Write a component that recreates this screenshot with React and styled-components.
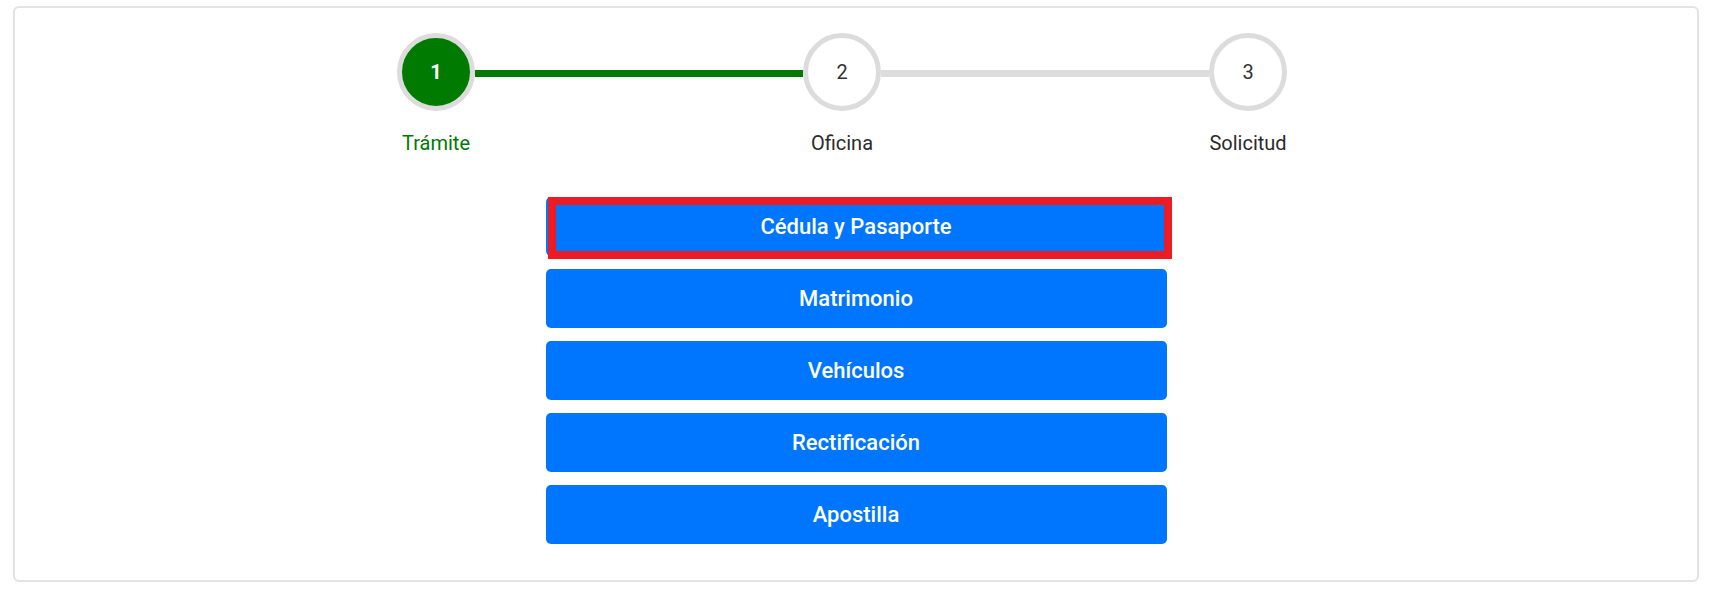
import { Fragment } from 'react';
import styled, { createGlobalStyle } from 'styled-components';

const GlobalStyle = createGlobalStyle`
  html, body {
    margin: 0;
    padding: 0;
    background: #ffffff;
    font-family: Roboto, 'Liberation Sans', sans-serif;
  }
`;

const Page = styled.div`
  padding: 6px 16px 12px 13px;
`;

const Card = styled.div`
  display: flex;
  flex-direction: column;
  align-items: center;
  padding: 25px 0 36px;
  background: #ffffff;
  border: 2px solid #e3e3e3;
  border-radius: 6px;
`;

const Stepper = styled.div`
  display: flex;
  align-items: flex-start;
  margin-right: 28px;
`;

const Step = styled.div`
  display: flex;
  flex-direction: column;
  align-items: center;
  width: 78px;
`;

const Circle = styled.div`
  box-sizing: border-box;
  width: 78px;
  height: 78px;
  border: 5px solid #dcdcdc;
  border-radius: 50%;
  display: flex;
  align-items: center;
  justify-content: center;
  background: ${p => (p.$active ? '#007a00' : '#ffffff')};
  color: ${p => (p.$active ? '#ffffff' : '#333333')};
  font-size: 20px;
  font-weight: ${p => (p.$active ? 700 : 400)};
`;

const StepLabel = styled.span`
  margin-top: 20px;
  line-height: 24px;
  font-size: 20px;
  white-space: nowrap;
  color: ${p => (p.$active ? '#007a00' : '#2b2b2b')};
`;

const Connector = styled.div`
  width: 328px;
  height: 7px;
  margin-top: 37px;
  background: ${p => (p.$done ? '#007a00' : '#dddddd')};
`;

const OptionList = styled.div`
  display: flex;
  flex-direction: column;
  gap: 13px;
  width: 621px;
  margin-top: 42px;
`;

const OptionButton = styled.button`
  position: relative;
  height: 59px;
  border: none;
  border-radius: 5px;
  background: #0076ff;
  color: #ffffff;
  font-family: Roboto, 'Liberation Sans', sans-serif;
  font-size: 22px;
  font-weight: 500;
  cursor: pointer;

  ${p =>
    p.$marked &&
    `
    &::after {
      content: '';
      position: absolute;
      left: 2px;
      top: 0;
      right: -5px;
      bottom: -3px;
      border: 8px solid #ed1c24;
      pointer-events: none;
    }
  `}
`;

const steps = ['Trámite', 'Oficina', 'Solicitud'];
const options = ['Cédula y Pasaporte', 'Matrimonio', 'Vehículos', 'Rectificación', 'Apostilla'];
const current = 0;

export default function App() {
  return (
    <>
      <GlobalStyle />
      <Page>
        <Card>
          <Stepper>
            {steps.map((label, i) => (
              <Fragment key={label}>
                {i > 0 && <Connector $done={i - 1 <= current} />}
                <Step>
                  <Circle $active={i === current}>{i + 1}</Circle>
                  <StepLabel $active={i === current}>{label}</StepLabel>
                </Step>
              </Fragment>
            ))}
          </Stepper>

          <OptionList>
            {options.map((name, i) => (
              <OptionButton key={name} $marked={i === 0}>
                {name}
              </OptionButton>
            ))}
          </OptionList>
        </Card>
      </Page>
    </>
  );
}
